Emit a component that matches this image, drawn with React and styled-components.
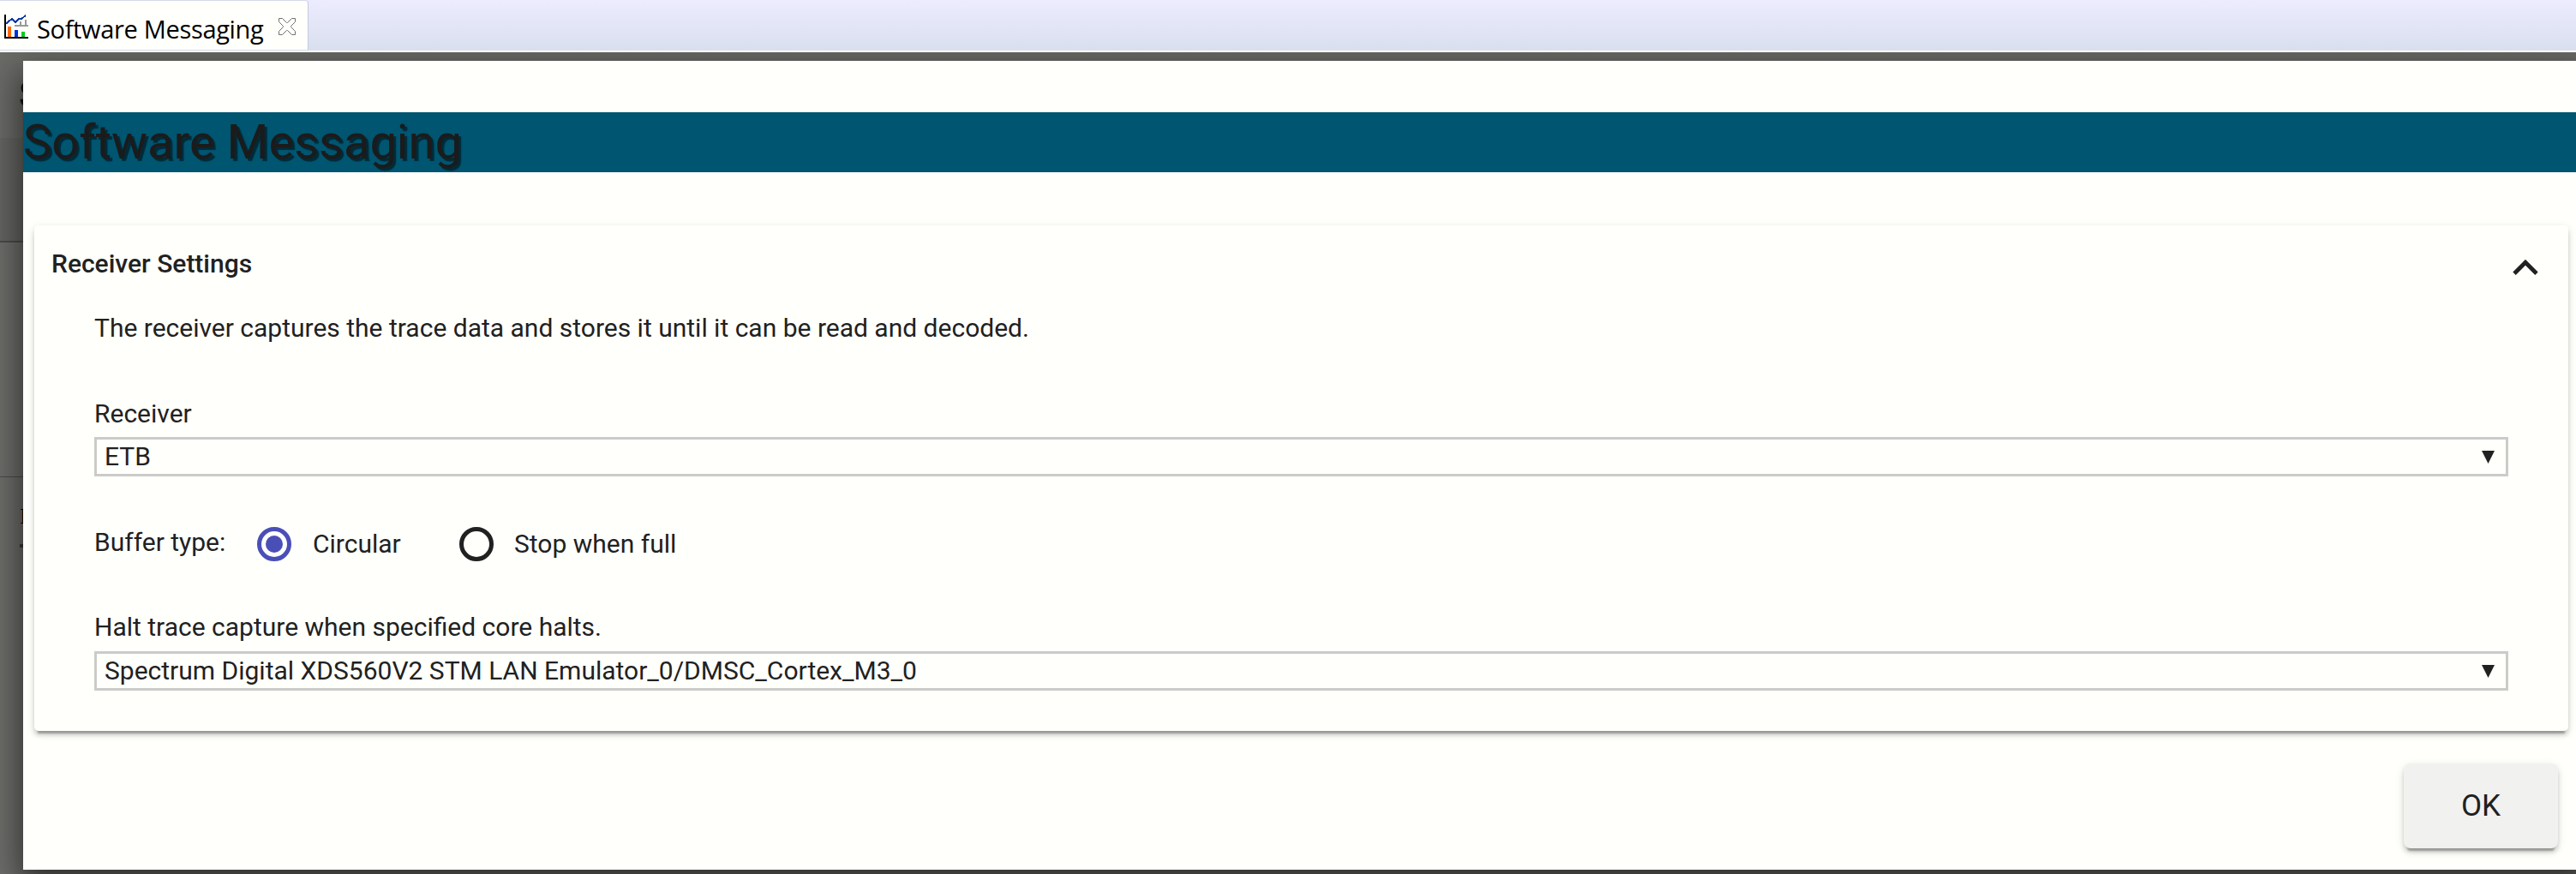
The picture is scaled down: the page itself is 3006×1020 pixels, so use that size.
import React from "react";
import styled, { createGlobalStyle } from "styled-components";

const Global = createGlobalStyle`
  * { box-sizing: border-box; }
  body { margin: 0; overflow: hidden; background: #fffffc; font-family: Roboto, "Liberation Sans", sans-serif; color: #212121; }
`;

const Page = styled.div`
  display: flex;
  flex-direction: column;
  width: 3006px;
  height: 1020px;
  overflow: hidden;
`;

const TabBar = styled.div`
  display: flex;
  flex: none;
  height: 61px;
  border-bottom: 2px solid #fffffc;
  background: linear-gradient(#ececfe, #d9dfee);
`;

const Tab = styled.div`
  display: flex;
  align-items: center;
  width: 360px;
  border-top: 1px solid #d5daeb;
  border-right: 1px solid #c5cade;
  border-bottom: 1px solid #d5daeb;
  border-radius: 0 4px 0 0;
  background: #fffffc;
  padding: 3px 0 0 5px;
`;

const TabTitle = styled.span`
  flex: none;
  width: 282px;
  margin-left: 10px;
  padding-top: 5px;
  font: 29px/40px "Open Sans", "Noto Sans", sans-serif;
  letter-spacing: -0.33px;
  color: #000;
  white-space: nowrap;
`;

const Workspace = styled.div`
  position: relative;
  flex: 1;
  display: flex;
  flex-direction: column;
  padding: 10px 0 5px 27px;
  overflow: hidden;
  background: #62625f;
`;

const Backdrop = styled.div`
  position: absolute;
  inset: 0;
  display: flex;
  flex-direction: column;
`;

const Strip = styled.div`
  height: ${(p) => p.$h}px;
  flex: ${(p) => (p.$h ? "none" : 1)};
  background: ${(p) => p.$bg};
  border-bottom: ${(p) => p.$line || 0}px solid #4c4c4a;
  padding: ${(p) => p.$pad || 0}px 0 0 ${(p) => p.$left || 0}px;
`;

const BackTitle = styled.div`
  font: 700 44px/50px Roboto, sans-serif;
  color: #001c26;
`;

const BackText = styled.div`
  font: 26px/30px "Liberation Serif", serif;
  color: #000;
`;

const BackMark = styled.div`
  width: 40px;
  height: 4px;
  margin-top: 17px;
  background: #3c3c3a;
`;

const Dialog = styled.section`
  position: relative;
  flex: 1;
  display: flex;
  flex-direction: column;
  margin-right: -14px;
  padding: 60px 23px 0 0;
  background: #fffffc;
  box-shadow: 0 20px 30px 2px rgba(0, 0, 0, 0.4), 0 8px 50px 8px rgba(0, 0, 0, 0.25);
`;

const Title = styled.h1`
  height: 70px;
  margin: 0 -23px 0 0;
  background: #005571;
  color: #1b1b1b;
  font-size: 56px;
  font-weight: 400;
  line-height: 71px;
  text-shadow: 3px 3px 1px rgba(0, 0, 0, 0.5);
  white-space: nowrap;
`;

const Card = styled.section`
  height: 590px;
  margin: 62px 0 0 13px;
  padding: 27px 70px 0;
  border-radius: 5px;
  box-shadow: 0 5px 5px 0 rgba(0, 0, 0, 0.14), 0 3px 12px 0 rgba(0, 0, 0, 0.12), 0 7px 2px -4px rgba(0, 0, 0, 0.25);
`;

const CardHeader = styled.header`
  display: flex;
  justify-content: space-between;
  height: 75px;
  margin: 0 -50px;
  padding-right: 15px;
`;

const Heading = styled.h2`
  margin: 0;
  font-size: 30px;
  font-weight: 500;
  line-height: 36px;
`;

const Line = styled.div`
  height: ${(p) => p.$h}px;
  font-size: 30px;
  line-height: 36px;
  white-space: nowrap;
`;

const Select = styled.div`
  display: flex;
  justify-content: space-between;
  align-items: center;
  height: 46px;
  padding: 0 13px 0 9px;
  border: 3px solid #cbcbc9;
  font-size: 30px;
  line-height: 36px;
`;

const RadioRow = styled.div`
  display: flex;
  align-items: center;
  height: 158px;
  font-size: 30px;
  line-height: 36px;
`;

const RadioLabel = styled.span`
  width: ${(p) => p.$w}px;
  margin-top: ${(p) => p.$shift || 0}px;
  white-space: nowrap;
`;

const Radio = styled.span`
  display: grid;
  place-items: center;
  width: 40px;
  height: 40px;
  margin-right: ${(p) => (p.$on ? 25 : 24)}px;
  border: 5px solid ${(p) => (p.$on ? "#4a4fb8" : "#212121")};
  border-radius: 50%;
  &::after {
    content: "";
    width: 20px;
    height: 20px;
    border-radius: 50%;
    background: ${(p) => (p.$on ? "#4a4fb8" : "transparent")};
  }
`;

const Button = styled.button`
  align-self: flex-end;
  width: 180px;
  height: 99px;
  margin: 38px 12px 0 0;
  border: 0;
  border-radius: 8px;
  background: #f1f1f0;
  color: #212121;
  font: 35px/40px Roboto, sans-serif;
  box-shadow: 0 5px 5px 0 rgba(0, 0, 0, 0.14), 0 3px 12px 0 rgba(0, 0, 0, 0.12), 0 7px 2px -4px rgba(0, 0, 0, 0.25);
`;

const ChartIcon = () => (
  <svg width="28" height="28" viewBox="0 0 28 28" shapeRendering="crispEdges">
    <path d="M12 12h16v2H12zM18 8h2v5h-2zM24 6h2v7h-2z" fill="#999" />
    <path d="M2 11l3-3 4-3 4 4 4-4 3 0 5-4" fill="none" stroke="#0b3aa5" strokeWidth="2" />
    <path d="M4 14h4v12H4z" fill="#ff6a00" />
    <path d="M12 18h4v8h-4z" fill="#0033d6" />
    <path d="M20 20h4v6h-4z" fill="#00cc22" />
    <path d="M0 0h2v26h26v2H0z" fill="#000" />
  </svg>
);

const CloseIcon = () => (
  <svg width="20" height="20" viewBox="0 0 20 20">
    <path d="M.5.5h4l5 5h1l5-5h4v4l-5 5v1l5 5v4h-4l-5-5h-1l-5 5h-4v-4l5-5v-1l-5-5z" fill="none" stroke="#707070" />
  </svg>
);

const ChevronSvg = styled.svg`
  flex: none;
  margin-top: 13px;
`;

const Chevron = () => (
  <ChevronSvg width="30" height="18" viewBox="0 0 30 18">
    <path d="M2 16.2L15 3.2l13 13" fill="none" stroke="#212121" strokeWidth="4.8" />
  </ChevronSvg>
);

const Arrow = () => (
  <svg width="15" height="15" viewBox="0 0 15 15">
    <path d="M0 0h15L7.5 15z" fill="#212121" />
  </svg>
);

export default function App() {
  return (
    <Page>
      <Global />
      <TabBar>
        <Tab>
          <ChartIcon />
          <TabTitle>Software Messaging</TabTitle>
          <CloseIcon />
        </Tab>
      </TabBar>
      <Workspace>
        <Backdrop aria-hidden="true">
          <Strip $h={100} $bg="#6c6c69" $pad={25} $left={22}>
            <BackTitle>S</BackTitle>
          </Strip>
          <Strip $h={122} $bg="#666663" $line={2} />
          <Strip $h={274} $bg="#6f6f6c" $line={1} />
          <Strip $bg="#6f6f6c" $pad={31} $left={23}>
            <BackText>I</BackText>
            <BackMark />
          </Strip>
        </Backdrop>
        <Dialog>
          <Title>Software Messaging</Title>
          <Card>
            <CardHeader>
              <Heading>Receiver Settings</Heading>
              <Chevron />
            </CardHeader>
            <Line $h={100}>The receiver captures the trace data and stores it until it can be read and decoded.</Line>
            <Line $h={45}>Receiver</Line>
            <Select>
              <span>ETB</span>
              <Arrow />
            </Select>
            <RadioRow>
              <RadioLabel $w={190} $shift={-4}>Buffer type:</RadioLabel>
              <Radio $on />
              <RadioLabel $w={171}>Circular</RadioLabel>
              <Radio />
              <RadioLabel>Stop when full</RadioLabel>
            </RadioRow>
            <Line $h={46}>Halt trace capture when specified core halts.</Line>
            <Select>
              <span>Spectrum Digital XDS560V2 STM LAN Emulator_0/DMSC_Cortex_M3_0</span>
              <Arrow />
            </Select>
          </Card>
          <Button>OK</Button>
        </Dialog>
      </Workspace>
    </Page>
  );
}
